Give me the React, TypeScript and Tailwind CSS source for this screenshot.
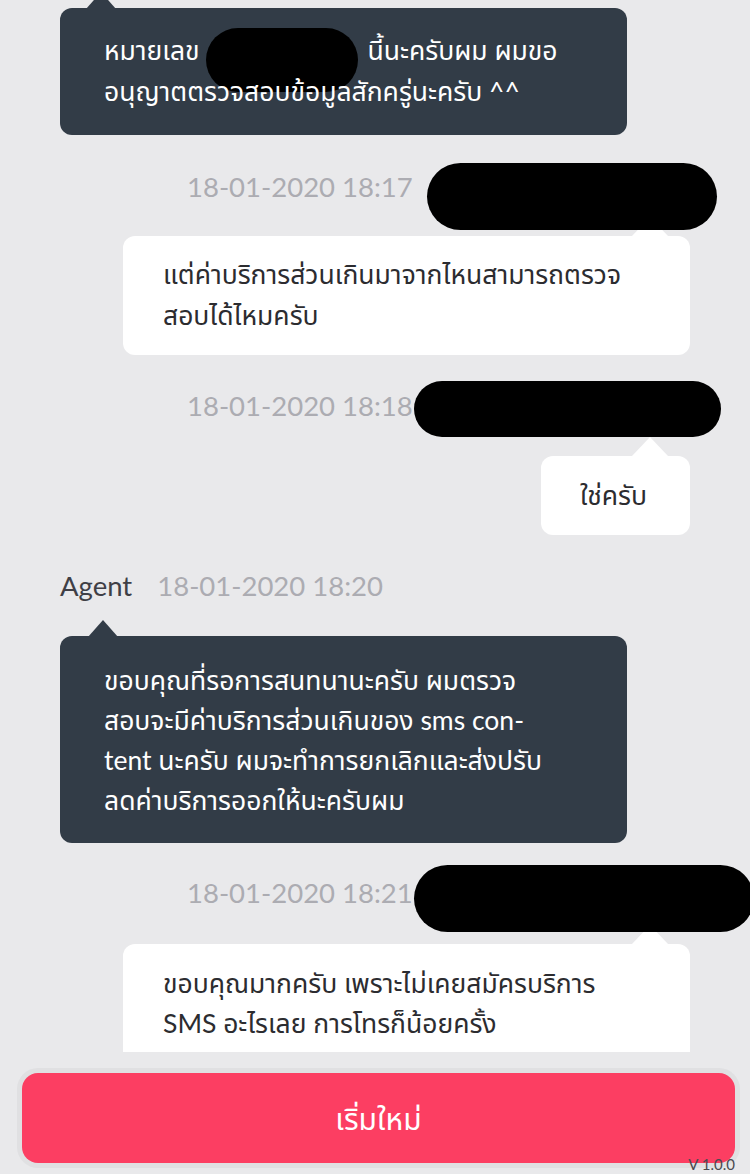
import React from "react";

const font = { fontFamily: "Lato, 'Noto Sans', 'Noto Sans Thai', sans-serif" };

function UpArrowDark({ left }: { left: string }) {
  return (
    <div
      className={`absolute top-[-16px] ${left} w-0 h-0 border-l-[15px] border-r-[15px] border-b-[17px] border-l-transparent border-r-transparent border-b-[#323c47]`}
    />
  );
}

function UpArrowWhite() {
  return (
    <div className="absolute top-[-19px] right-[22px] w-0 h-0 border-l-[18px] border-r-[18px] border-b-[19px] border-l-transparent border-r-transparent border-b-white" />
  );
}

function Stamp({ text, blobW, blobH, blobML, textMT, blobClass }: { text: string; blobW: string; blobH: string; blobML: string; textMT: string; blobClass: string }) {
  return (
    <div className="flex items-start pl-[187px] relative z-10">
      <span className={`${textMT} text-[27.5px] leading-[30px] text-[#acacb2] whitespace-nowrap`}>{text}</span>
      <div className={`${blobW} ${blobH} ${blobML} ${blobClass} bg-black shrink-0`} />
    </div>
  );
}

export default function App() {
  return (
    <div className="w-[750px] h-[1174px] bg-[#e9e9eb] overflow-hidden flex flex-col" style={font}>
      <div className="h-[1052px] overflow-hidden flex flex-col items-start pt-[8px] shrink-0">
        {/* dark bubble 1 */}
        <div className="relative shrink-0 ml-[60px] w-[567px] h-[127px] bg-[#323c47] rounded-[12px] px-[44px] py-[22px] text-white text-[26.5px] leading-[41px]">
          <UpArrowDark left="left-[26px]" />
          <div className="flex items-center">
            <span>หมายเลข</span>
            <span className="ml-[6px] mr-[10px] w-[152px] h-[64px] bg-black rounded-[32px] -mb-[22px] -mt-[4px] shrink-0" />
            <span>นี้นะครับผม ผมขอ</span>
          </div>
          <div>อนุญาตตรวจสอบข้อมูลสักครู่นะครับ ^^</div>
        </div>

        <div className="mt-[28px] w-full shrink-0">
          <Stamp text="18-01-2020 18:17" blobW="w-[290px]" blobH="h-[67px]" blobML="ml-[14px]" textMT="mt-[9px]" blobClass="rounded-[34px]" />
        </div>

        {/* white bubble 1 */}
        <div className="relative shrink-0 mt-[6px] ml-[123px] w-[567px] h-[119px] bg-white rounded-[12px] px-[40px] pt-[18px] text-[#2c2c30] text-[26.5px] leading-[41px]">
          <UpArrowWhite />
          <div>แต่ค่าบริการส่วนเกินมาจากไหนสามารถตรวจ</div>
          <div>สอบได้ไหมครับ</div>
        </div>

        <div className="mt-[26px] w-full shrink-0">
          <Stamp text="18-01-2020 18:18" blobW="w-[307px]" blobH="h-[56px]" blobML="ml-[1px]" textMT="mt-[10px]" blobClass="rounded-[28px]" />
        </div>

        {/* white bubble 2 */}
        <div className="relative shrink-0 mt-[19px] ml-[541px] w-[149px] h-[79px] bg-white rounded-[12px] flex items-center justify-center text-[#2c2c30] text-[26.5px] leading-[41px]">
          <UpArrowWhite />
          <span className="ml-[-4px]">ใช่ครับ</span>
        </div>

        {/* agent row */}
        <div className="mt-[36px] ml-[60px] flex items-center h-[30px] shrink-0">
          <span className="text-[27.5px] leading-[30px] text-[#3f3f46]">Agent</span>
          <span className="ml-[25px] text-[27.5px] leading-[30px] text-[#acacb2]">18-01-2020 18:20</span>
        </div>

        {/* dark bubble 2 */}
        <div className="relative shrink-0 mt-[35px] ml-[60px] w-[567px] h-[207px] bg-[#323c47] rounded-[12px] px-[44px] pt-[24px] text-white text-[26.5px] leading-[40px]">
          <UpArrowDark left="left-[28px]" />
          <div>ขอบคุณที่รอการสนทนานะครับ ผมตรวจ</div>
          <div>สอบจะมีค่าบริการส่วนเกินของ sms con-</div>
          <div>tent นะครับ ผมจะทำการยกเลิกและส่งปรับ</div>
          <div>ลดค่าบริการออกให้นะครับผม</div>
        </div>

        <div className="mt-[22px] w-full shrink-0">
          <Stamp text="18-01-2020 18:21" blobW="w-[340px]" blobH="h-[67px]" blobML="ml-[1px]" textMT="mt-[13px]" blobClass="rounded-[34px]" />
        </div>

        {/* white bubble 3 */}
        <div className="relative shrink-0 mt-[12px] ml-[123px] w-[567px] h-[140px] bg-white rounded-[12px] px-[40px] pt-[19px] text-[#2c2c30] text-[26.5px] leading-[40px]">
          <UpArrowWhite />
          <div>ขอบคุณมากครับ เพราะไม่เคยสมัครบริการ</div>
          <div>SMS อะไรเลย การโทรก็น้อยครั้ง</div>
        </div>
      </div>

      {/* footer */}
      <div className="relative flex-1 pt-[16px] pl-[17px] pr-[10px]">
        <div className="bg-[#e0e0e2] rounded-[21px] p-[5px] h-[100px]">
          <button className="w-full h-[90px] bg-[#fc3e62] rounded-[16px] text-white text-[30px] flex items-center justify-center" style={font}>
            เริ่มใหม่
          </button>
        </div>
        <span className="absolute right-[15px] bottom-[2px] text-[15px] leading-[15px] text-[#4a4a50]">V 1.0.0</span>
      </div>
    </div>
  );
}
